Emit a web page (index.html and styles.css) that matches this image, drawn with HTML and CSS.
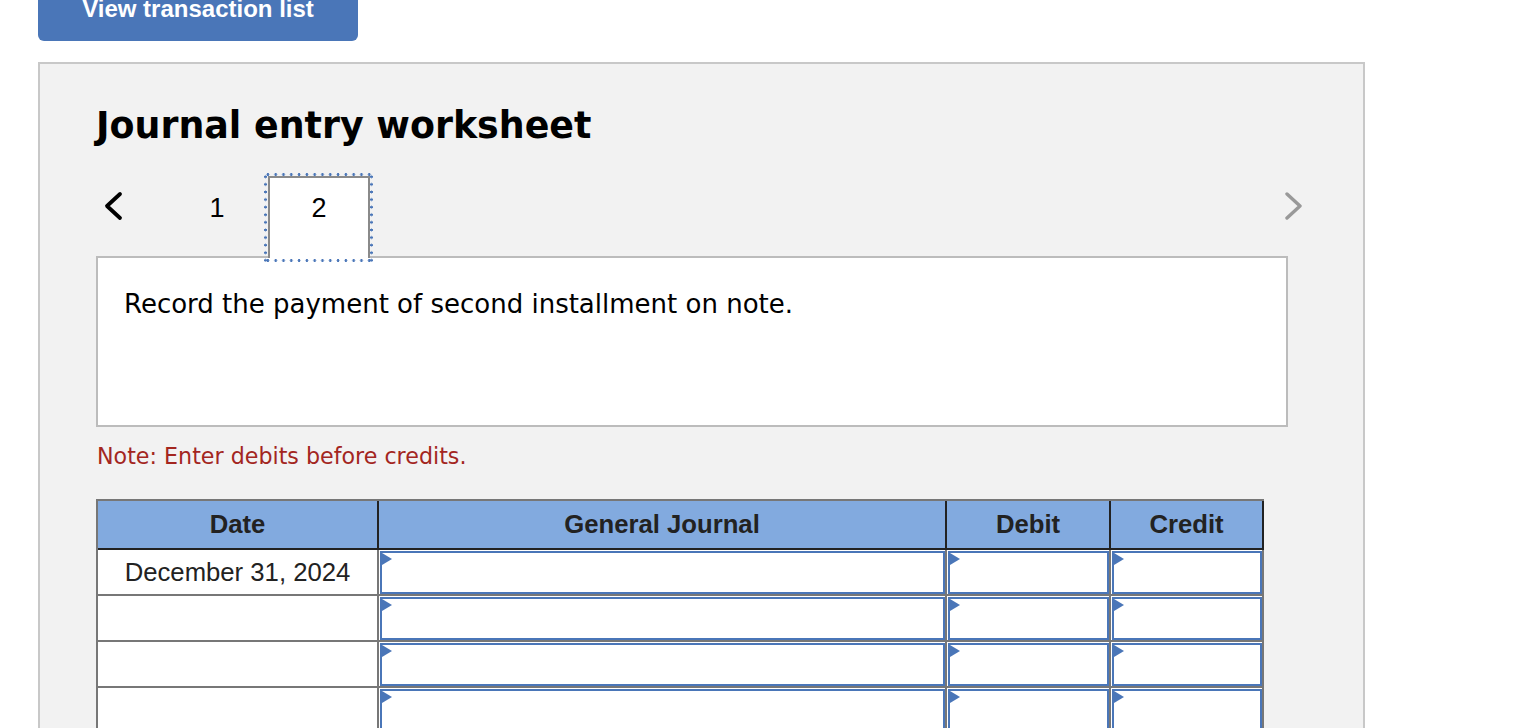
FILE: index.html
```html
<!DOCTYPE html>
<html lang="en">
<head>
<meta charset="utf-8">
<title>Journal entry worksheet</title>
<link rel="stylesheet" href="styles.css">
</head>
<body>
<div class="topbar">
  <a class="btn" href="#">View transaction list</a>
</div>
<section class="panel">
  <h1 class="title">Journal entry worksheet</h1>
  <div class="nav">
    <svg class="chev prev" width="20" height="30" viewBox="0 0 20 30"><path d="M17 3 L4 15 L17 27" fill="none" stroke="#000" stroke-width="3.8" stroke-linecap="round" stroke-linejoin="round"/></svg>
    <div class="tabs">
      <span class="tab">1</span>
      <span class="tab active">2</span>
    </div>
    <svg class="chev next" width="18" height="30" viewBox="0 0 18 30"><path d="M3 3 L16 15 L3 27" fill="none" stroke="#999" stroke-width="3.4" stroke-linecap="round" stroke-linejoin="round"/></svg>
  </div>
  <div class="prompt">Record the payment of second installment on note.</div>
  <p class="note">Note: Enter debits before credits.</p>
  <table class="journal">
    <thead>
      <tr>
        <th class="c-date">Date</th>
        <th class="c-gj">General Journal</th>
        <th class="c-dr">Debit</th>
        <th class="c-cr">Credit</th>
      </tr>
    </thead>
    <tbody>
      <tr>
        <td class="date">December 31, 2024</td>
        <td><div class="inp"></div></td>
        <td><div class="inp"></div></td>
        <td><div class="inp"></div></td>
      </tr>
      <tr>
        <td class="date"></td>
        <td><div class="inp"></div></td>
        <td><div class="inp"></div></td>
        <td><div class="inp"></div></td>
      </tr>
      <tr>
        <td class="date"></td>
        <td><div class="inp"></div></td>
        <td><div class="inp"></div></td>
        <td><div class="inp"></div></td>
      </tr>
      <tr>
        <td class="date"></td>
        <td><div class="inp"></div></td>
        <td><div class="inp"></div></td>
        <td><div class="inp"></div></td>
      </tr>
    </tbody>
  </table>
</section>
</body>
</html>
```
FILE: styles.css
```css
html, body {
  margin: 0;
  padding: 0;
  background: #fff;
  overflow: hidden;
  height: 728px;
}
body {
  font-family: "DejaVu Sans", Verdana, sans-serif;
  color: #000;
}
.topbar {
  display: flex;
  height: 41px;
  padding-left: 38px;
}
.btn {
  display: block;
  width: 320px;
  height: 41px;
  box-sizing: border-box;
  background: #4a76b8;
  color: #fff;
  text-decoration: none;
  text-align: center;
  font-family: "Liberation Sans", Arial, sans-serif;
  font-weight: bold;
  font-size: 24px;
  line-height: 17px;
  border-radius: 0 0 6px 6px;
}
.panel {
  margin: 21px 0 0 38px;
  width: 1327px;
  box-sizing: border-box;
  border: 2px solid #c8c8c8;
  background: #f2f2f2;
  padding: 41px 75px 200px 56px;
}
.title {
  margin: 0;
  font-family: "DejaVu Sans", Verdana, sans-serif;
  font-weight: bold;
  font-size: 36.4px;
  line-height: 42px;
  color: #000;
}
.nav {
  margin-top: 29px;
  margin-right: -14px;
  padding-left: 7px;
  display: flex;
  align-items: flex-start;
}
.chev {
  display: block;
  margin-top: 15px;
  flex: none;
}
.chev.next {
  margin-left: auto;
}
.tabs {
  display: flex;
  margin-left: 43px;
}
.tab {
  display: block;
  width: 102px;
  box-sizing: border-box;
  margin-bottom: -2px;
  padding: 15px 0 35px;
  border: 2px solid transparent;
  border-bottom: 0;
  font-family: "Liberation Sans", Arial, sans-serif;
  font-size: 27px;
  line-height: 30px;
  text-align: center;
  color: #000;
}
.tab.active {
  position: relative;
  z-index: 1;
  background: #fff;
  border-color: #8a8a8a;
}
.tab.active::after {
  content: "";
  position: absolute;
  left: -6px;
  right: -5px;
  top: -5px;
  bottom: -4px;
  pointer-events: none;
  background:
    radial-gradient(circle, #4a76b8 1.1px, transparent 1.7px) 0 0 / 7.8px 3px repeat-x,
    radial-gradient(circle, #4a76b8 1.1px, transparent 1.7px) 0 100% / 7.8px 3px repeat-x,
    radial-gradient(circle, #4a76b8 1.1px, transparent 1.7px) 0 0 / 3px 7.6px repeat-y,
    radial-gradient(circle, #4a76b8 1.1px, transparent 1.7px) 100% 0 / 3px 7.6px repeat-y;
}
.prompt {
  background: #fff;
  border: 2px solid #bcbcbc;
  padding: 30px 26px 105px;
  font-size: 26px;
  line-height: 32px;
  color: #000;
}
.note {
  margin: 16px 0 0 1px;
  font-size: 22.2px;
  line-height: 26px;
  color: #a3261f;
}
.journal {
  margin-top: 30px;
  width: 1168px;
  table-layout: fixed;
  border-collapse: separate;
  border-spacing: 0;
  border-top: 2px solid #777;
  border-left: 2px solid #777;
  font-family: "Liberation Sans", Arial, sans-serif;
  font-size: 25.7px;
  color: #222;
}
.journal th {
  box-sizing: border-box;
  height: 49px;
  padding: 0;
  background: #82aadf;
  border-right: 2px solid #222;
  border-bottom: 2px solid #222;
  font-weight: bold;
  text-align: center;
  vertical-align: middle;
}
.c-date { width: 281px; }
.c-gj { width: 568px; }
.c-dr { width: 164px; }
.c-cr { width: 153px; }
.journal td {
  box-sizing: border-box;
  height: 46px;
  padding: 1px 0 0 1px;
  background: #fff;
  border-right: 2px solid #777;
  border-bottom: 2px solid #777;
  vertical-align: top;
}
.journal td.date {
  padding: 0;
  text-align: center;
  vertical-align: middle;
}
.inp {
  position: relative;
  box-sizing: border-box;
  height: 43px;
  border: 2px solid #4a76b8;
  background: #fff;
}
.inp::before {
  content: "";
  position: absolute;
  top: 0;
  left: 0;
  border-top: 6.5px solid transparent;
  border-bottom: 6.5px solid transparent;
  border-left: 10px solid #4a76b8;
}
```
